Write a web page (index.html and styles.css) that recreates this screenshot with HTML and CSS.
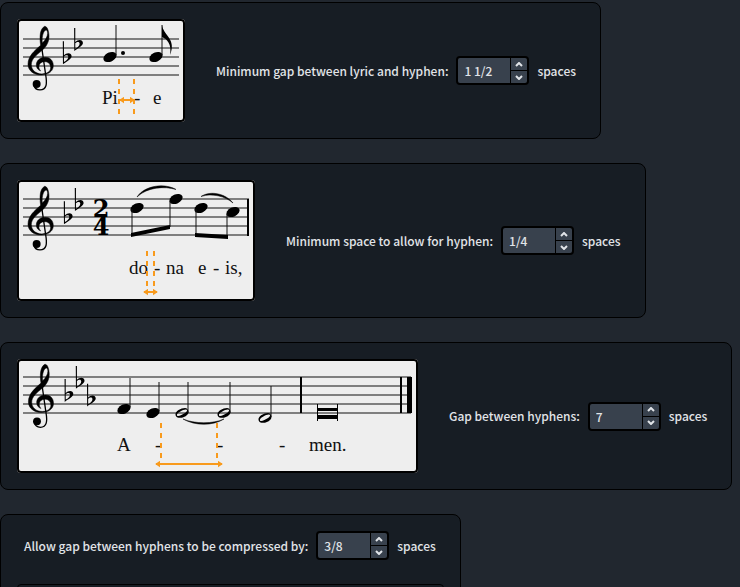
FILE: index.html
```
<!doctype html>
<html lang="en">
  <head>
    <meta charset="UTF-8" />
    <meta name="viewport" content="width=device-width, initial-scale=1.0" />
    <title>Lyric hyphens</title>
    <link rel="stylesheet" href="styles.css">
  </head>
  <body>
    <!-- Shared glyphs -->
    <svg class="defs" width="0" height="0" aria-hidden="true">
      <defs>
        <g id="clef">
          <path fill-rule="evenodd" stroke="#000" stroke-width="1.500" d="M74 19C60 26 58 50 62 76C44 92 24 108 24 133C24 152 42 166 64 165C86 164 100 154 100 137C100 122 90 112 76 112C60 112 49 122 49 135C49 144 54 150 62 153C58 148 56 144 57 138C58 130 64 125 75 125C85 125 92 132 92 143C92 155 82 161 66 162C47 162 34 150 34 134C34 118 48 106 67 91C79 80 88 66 87 46C86 32 82 19 74 19ZM78 30C71 33 65 46 67 69C76 61 83 50 83 40C83 34 81 30 78 30Z" />
          <path fill="none" stroke="#000" stroke-width="4" d="M64 74L77 164C82 192 80 210 60 210C50 210 44 204 42 196" />
          <circle cx="50" cy="192" r="12" />
        </g>
        <path id="flat" fill-rule="evenodd" d="M-1.500 0H2V42C9 34 25 33 25 45C25 54 10 60 -1 69ZM2 46V62C9 58 15 53 15 47C15 40 7 41 2 46Z" />
        <ellipse id="note" rx="7" ry="4.600" transform="rotate(-25)" />
        <path id="half" fill-rule="evenodd" d="M-6.500 2C-7 -2 -1 -5 3 -5C7 -4.500 7.500 0 5 2C2 5.500 -6 6 -6.500 2ZM-5 2.500C-4 4 0 2 3 0C5 -1.500 6 -3 4 -3.500C2 -4 -6 0 -5 2.500Z" />
        <marker id="arrow" viewBox="0 0 6 8" refX="5" refY="4" markerWidth="5" markerHeight="7" markerUnits="userSpaceOnUse" orient="auto-start-reverse">
          <path d="M0 0L6 4L0 8Z" fill="#f89a1c" />
        </marker>
      </defs>
    </svg>

    <main class="options">
      <section class="card">
        <svg class="score" width="168" height="103" viewBox="-2 -2 168 103" role="img" aria-label="Gap between lyric and hyphen">
          <path class="staff" d="M4 18H160M4 27H160M4 36H160M4 45H160M4 54H160" />
          <g transform="translate(1 -1) scale(.333)">
            <use href="#clef" />
            <use href="#flat" x="130" y="64" />
            <use href="#flat" x="164" y="24" />
          </g>
          <use href="#note" transform="translate(91 36)" />
          <circle cx="104" cy="32" r="2" />
          <use href="#note" transform="translate(137 36)" />
          <path class="stem" d="M97 4V34M143 4V34" />
          <path d="M143 4C144 14 158 18 151 34C153 23 148 18 143 16Z" />
          <text class="lyric" x="83" y="83">Pi</text>
          <text class="lyric" x="115" y="83">-</text>
          <text class="lyric" x="134" y="83">e</text>
          <path class="guide" d="M100 58V95M115 58V95" />
          <path class="measure" d="M101 79H115" />
        </svg>
        <div class="field">
          <label for="lyric-gap">Minimum gap between lyric and hyphen:</label>
          <div class="spinbox">
            <input id="lyric-gap" type="text" value="1 1/2">
            <button type="button" class="up" aria-label="Increase"><svg viewBox="0 0 8 5"><path d="M1 4L4 1L7 4" /></svg></button>
            <button type="button" class="down" aria-label="Decrease"><svg viewBox="0 0 8 5"><path d="M1 1L4 4L7 1" /></svg></button>
          </div>
          <span>spaces</span>
        </div>
      </section>

      <section class="card">
        <svg class="score" width="238" height="121" viewBox="-2 -2 238 121" role="img" aria-label="Space allowed for hyphen">
          <path class="staff" d="M4 17H230M4 26H230M4 35H230M4 44H230M4 53H230" />
          <path d="M228 17H230V54H228Z" />
          <g transform="translate(1 -2) scale(.333)">
            <use href="#clef" />
            <use href="#flat" x="133" y="64" />
            <use href="#flat" x="166" y="24" />
          </g>
          <text class="meter" x="82" y="35">2</text>
          <text class="meter" x="82" y="53">4</text>
          <use href="#note" transform="translate(118 26)" />
          <use href="#note" transform="translate(157 17)" />
          <use href="#note" transform="translate(182 26)" />
          <use href="#note" transform="translate(214 30)" />
          <path class="stem" d="M113 27V53M151 19V45M177 27V53M208 32V56" />
          <path d="M112 51L151 43V47L112 55ZM176 51L209 53V57L176 55Z" />
          <path class="slur" d="M118 15C126 3 146 1 157 7.500C146 4 128 5 118 15ZM182 14.500C192 8 207 12 214 21C206 14 193 11 182 14.500Z" />
          <text class="lyric" x="110" y="92">do</text>
          <text class="lyric" x="135" y="92">-</text>
          <text class="lyric" x="147" y="92">na</text>
          <text class="lyric" x="179" y="92">e</text>
          <text class="lyric" x="194" y="92">-</text>
          <text class="lyric" x="206" y="92">is,</text>
          <path class="guide" d="M128 69V105M135 69V105" />
          <path class="measure" d="M125 110H138" />
        </svg>
        <div class="field">
          <label for="hyphen-space">Minimum space to allow for hyphen:</label>
          <div class="spinbox">
            <input id="hyphen-space" type="text" value="1/4">
            <button type="button" class="up" aria-label="Increase"><svg viewBox="0 0 8 5"><path d="M1 4L4 1L7 4" /></svg></button>
            <button type="button" class="down" aria-label="Decrease"><svg viewBox="0 0 8 5"><path d="M1 1L4 4L7 1" /></svg></button>
          </div>
          <span>spaces</span>
        </div>
      </section>

      <section class="card">
        <svg class="score" width="401" height="114" viewBox="-2 -2 401 114" role="img" aria-label="Gap between hyphens">
          <path class="staff" d="M4 16H392M4 25H392M4 34H392M4 43H392M4 52H392" />
          <path d="M281 16H283V52H281ZM381 16H383V52H381ZM388 16H393V52H388Z" />
          <g transform="translate(1.500 -3) scale(.33)">
            <use href="#clef" />
            <use href="#flat" x="135" y="64" />
            <use href="#flat" x="169" y="24" />
            <use href="#flat" x="203" y="78" />
          </g>
          <use href="#note" transform="translate(105 48)" />
          <use href="#note" transform="translate(134 52)" />
          <use href="#half" transform="translate(163 52)" />
          <use href="#half" transform="translate(205 52)" />
          <use href="#half" transform="translate(246 57)" />
          <path class="stem" d="M111 17V46M140 21V50M169 21V52M211 21V52M252 25V56" />
          <path class="slur" d="M164 58C176 65 194 65 205 58C194 63 176 63 164 58Z" />
          <!-- Breve -->
          <path d="M298 43H299V60H298ZM318 43H319V60H318ZM298 47H319V50H298ZM298 54H319V58H298Z" />
          <text class="lyric" x="98" y="90">A</text>
          <text class="lyric" x="136" y="90">-</text>
          <text class="lyric" x="198" y="90">-</text>
          <text class="lyric" x="260" y="90">-</text>
          <text class="lyric" x="290" y="90">men.</text>
          <path class="guide" d="M142 62V98M198 62V98" />
          <path class="measure" d="M137 103H203" />
        </svg>
        <div class="field">
          <label for="hyphen-gap">Gap between hyphens:</label>
          <div class="spinbox">
            <input id="hyphen-gap" type="text" value="7">
            <button type="button" class="up" aria-label="Increase"><svg viewBox="0 0 8 5"><path d="M1 4L4 1L7 4" /></svg></button>
            <button type="button" class="down" aria-label="Decrease"><svg viewBox="0 0 8 5"><path d="M1 1L4 4L7 1" /></svg></button>
          </div>
          <span>spaces</span>
        </div>
      </section>

      <section class="card stacked">
        <div class="field">
          <label for="compress">Allow gap between hyphens to be compressed by:</label>
          <div class="spinbox">
            <input id="compress" type="text" value="3/8">
            <button type="button" class="up" aria-label="Increase"><svg viewBox="0 0 8 5"><path d="M1 4L4 1L7 4" /></svg></button>
            <button type="button" class="down" aria-label="Decrease"><svg viewBox="0 0 8 5"><path d="M1 1L4 4L7 1" /></svg></button>
          </div>
          <span>spaces</span>
        </div>
        <div class="panel"></div>
      </section>
    </main>
  </body>
</html>
```
FILE: styles.css
```
* {
  box-sizing: border-box;
}

body {
  margin: 0;
  background: #21272f;
  color: #e1e4e8;
  font: 500 12px/16px "Noto Sans CJK SC", "Open Sans", sans-serif;
}

.defs {
  position: absolute;
}

.options {
  display: flex;
  flex-direction: column;
  align-items: flex-start;
  gap: 24px;
  padding-top: 2px;
}

.card {
  display: flex;
  align-items: center;
  gap: 24px;
  padding: 16px;
  background: #171d24;
  border: 1px solid #000;
  border-radius: 8px;
}

.card.stacked {
  flex-direction: column;
  align-items: stretch;
}

.field {
  display: flex;
  align-items: center;
  gap: 8px;
  padding: 0 8px 0 7px;
  white-space: nowrap;
}

/* Spin box */
.spinbox {
  display: grid;
  grid-template-columns: 52px 16px;
  grid-template-rows: 12px 12px;
  gap: 1px;
  background: #000;
  border: 2px solid #000;
  border-radius: 4px;
  overflow: hidden;
}

.spinbox input {
  grid-row: 1 / 3;
  width: 100%;
  min-width: 0;
  margin: 0;
  padding: 1px 6px 0;
  border: 0;
  background: #38414d;
  color: inherit;
  font: inherit;
}

.spinbox button {
  display: flex;
  align-items: center;
  justify-content: center;
  margin: 0;
  padding: 0;
  border: 0;
  background: #38414d;
}

.spinbox button svg {
  width: 8px;
  height: 5px;
  fill: none;
  stroke: #e1e4e8;
  stroke-width: 2;
}

/* Music examples */
.score {
  flex: none;
  background: #eee;
  border-radius: 4px;
  box-shadow: inset 0 0 0 2px #000;
}

.staff,
.stem {
  fill: none;
  stroke: #111;
  stroke-width: 1;
}

.slur {
  stroke: #000;
  stroke-width: 0.5;
}

.lyric {
  font: 19px "Liberation Serif", serif;
  fill: #111;
}

.meter {
  font: bold 24px "DejaVu Serif", serif;
  text-anchor: middle;
}

.guide {
  stroke: #f89a1c;
  stroke-width: 2;
  stroke-dasharray: 5 5;
}

.measure {
  stroke: #f89a1c;
  stroke-width: 2;
  marker-start: url(#arrow);
  marker-end: url(#arrow);
}

.panel {
  min-height: 120px;
  border: 1px solid #000;
  border-radius: 4px;
}
```
